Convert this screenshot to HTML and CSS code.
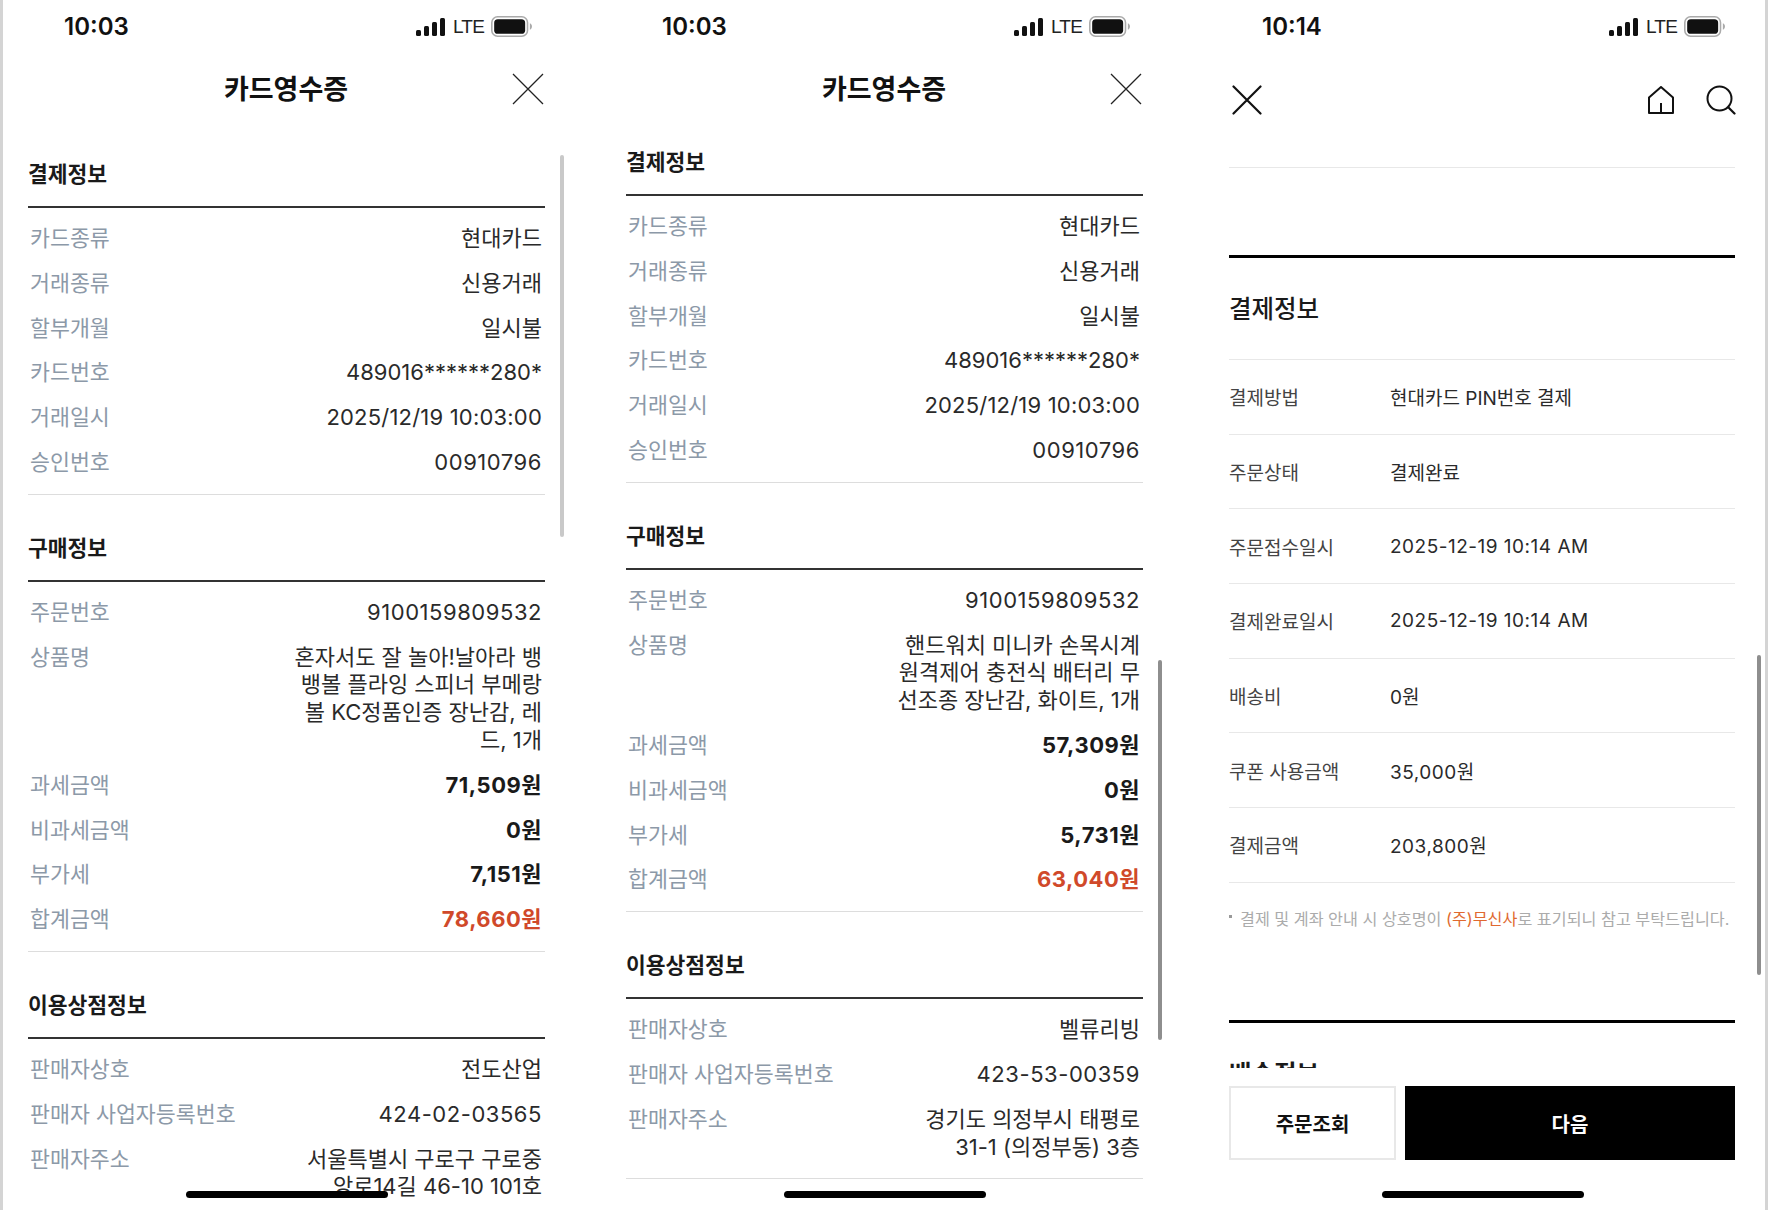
FILE: index.html
```html
<!DOCTYPE html>
<html lang="ko">
<head>
    <meta charset="UTF-8">
    <title>카드영수증</title>
    <link rel="stylesheet" href="styles.css">
</head>
<body>
    <div class="screens">
        <!-- 영수증 1 -->
        <section class="phone">
            <div class="status-bar">
                <span class="time">10:03</span>
                <div class="status-icons">
                    <svg width="30" height="18" viewBox="0 0 30 18"><rect x="0" y="12" width="5" height="6" rx="1.5"/><rect x="8" y="8" width="5" height="10" rx="1.5"/><rect x="16" y="4" width="5" height="14" rx="1.5"/><rect x="24" y="0" width="5" height="18" rx="1.5"/></svg>
                    <span class="lte">LTE</span>
                    <svg width="41" height="21" viewBox="0 0 39 20"><rect x="0.75" y="0.75" width="34" height="18.5" rx="5.5" fill="none" stroke="#aaa" stroke-width="1.5"/><rect x="3" y="3" width="29.5" height="14" rx="3.5"/><path d="M37 7v6c1.2-.5 2-1.6 2-3s-.8-2.500-2-3z" fill="#aaa"/></svg>
                </div>
            </div>
            <header class="receipt-nav">
                <h1>카드영수증</h1>
                <svg class="nav-close" width="32" height="32" viewBox="0 0 32 32"><path d="M1 1l30 30M31 1L1 31" fill="none" stroke="#222" stroke-width="1.3"/></svg>
            </header>
            <div class="receipt-body">
                <div class="receipt-section">
                    <h2>결제정보</h2>
                    <ul class="rows">
                        <li class="row"><span class="label">카드종류</span><span class="value">현대카드</span></li>
                        <li class="row"><span class="label">거래종류</span><span class="value">신용거래</span></li>
                        <li class="row"><span class="label">할부개월</span><span class="value">일시불</span></li>
                        <li class="row"><span class="label">카드번호</span><span class="value">489016******280*</span></li>
                        <li class="row"><span class="label">거래일시</span><span class="value date">2025/12/19 10:03:00</span></li>
                        <li class="row"><span class="label">승인번호</span><span class="value num">00910796</span></li>
                    </ul>
                </div>
                <div class="receipt-section">
                    <h2>구매정보</h2>
                    <ul class="rows">
                        <li class="row"><span class="label">주문번호</span><span class="value num">9100159809532</span></li>
                        <li class="row"><span class="label">상품명</span><span class="value">혼자서도 잘 놀아!날아라 뱅<br>뱅볼 플라잉 스피너 부메랑<br>볼 KC정품인증 장난감, 레<br>드, 1개</span></li>
                        <li class="row"><span class="label">과세금액</span><span class="value amount">71,509원</span></li>
                        <li class="row"><span class="label">비과세금액</span><span class="value amount">0원</span></li>
                        <li class="row"><span class="label">부가세</span><span class="value amount">7,151원</span></li>
                        <li class="row"><span class="label">합계금액</span><span class="value amount total">78,660원</span></li>
                    </ul>
                </div>
                <div class="receipt-section">
                    <h2>이용상점정보</h2>
                    <ul class="rows">
                        <li class="row"><span class="label">판매자상호</span><span class="value">전도산업</span></li>
                        <li class="row"><span class="label">판매자 사업자등록번호</span><span class="value num">424-02-03565</span></li>
                        <li class="row"><span class="label">판매자주소</span><span class="value">서울특별시 구로구 구로중<br>앙로14길 46-10 101호</span></li>
                    </ul>
                </div>
            </div>
            <div class="scrollbar scrollbar-one"></div>
            <div class="home-bar"></div>
        </section>

        <!-- 영수증 2 -->
        <section class="phone phone-scrolled">
            <div class="status-bar">
                <span class="time">10:03</span>
                <div class="status-icons">
                    <svg width="30" height="18" viewBox="0 0 30 18"><rect x="0" y="12" width="5" height="6" rx="1.5"/><rect x="8" y="8" width="5" height="10" rx="1.5"/><rect x="16" y="4" width="5" height="14" rx="1.5"/><rect x="24" y="0" width="5" height="18" rx="1.5"/></svg>
                    <span class="lte">LTE</span>
                    <svg width="41" height="21" viewBox="0 0 39 20"><rect x="0.75" y="0.75" width="34" height="18.5" rx="5.5" fill="none" stroke="#aaa" stroke-width="1.5"/><rect x="3" y="3" width="29.5" height="14" rx="3.5"/><path d="M37 7v6c1.2-.5 2-1.6 2-3s-.8-2.500-2-3z" fill="#aaa"/></svg>
                </div>
            </div>
            <header class="receipt-nav">
                <h1>카드영수증</h1>
                <svg class="nav-close" width="32" height="32" viewBox="0 0 32 32"><path d="M1 1l30 30M31 1L1 31" fill="none" stroke="#222" stroke-width="1.3"/></svg>
            </header>
            <div class="receipt-body">
                <div class="receipt-section">
                    <h2>결제정보</h2>
                    <ul class="rows">
                        <li class="row"><span class="label">카드종류</span><span class="value">현대카드</span></li>
                        <li class="row"><span class="label">거래종류</span><span class="value">신용거래</span></li>
                        <li class="row"><span class="label">할부개월</span><span class="value">일시불</span></li>
                        <li class="row"><span class="label">카드번호</span><span class="value">489016******280*</span></li>
                        <li class="row"><span class="label">거래일시</span><span class="value date">2025/12/19 10:03:00</span></li>
                        <li class="row"><span class="label">승인번호</span><span class="value num">00910796</span></li>
                    </ul>
                </div>
                <div class="receipt-section">
                    <h2>구매정보</h2>
                    <ul class="rows">
                        <li class="row"><span class="label">주문번호</span><span class="value num">9100159809532</span></li>
                        <li class="row"><span class="label">상품명</span><span class="value">핸드워치 미니카 손목시계<br>원격제어 충전식 배터리 무<br>선조종 장난감, 화이트, 1개</span></li>
                        <li class="row"><span class="label">과세금액</span><span class="value amount">57,309원</span></li>
                        <li class="row"><span class="label">비과세금액</span><span class="value amount">0원</span></li>
                        <li class="row"><span class="label">부가세</span><span class="value amount">5,731원</span></li>
                        <li class="row"><span class="label">합계금액</span><span class="value amount total">63,040원</span></li>
                    </ul>
                </div>
                <div class="receipt-section">
                    <h2>이용상점정보</h2>
                    <ul class="rows">
                        <li class="row"><span class="label">판매자상호</span><span class="value">벨류리빙</span></li>
                        <li class="row"><span class="label">판매자 사업자등록번호</span><span class="value num">423-53-00359</span></li>
                        <li class="row"><span class="label">판매자주소</span><span class="value">경기도 의정부시 태평로<br>31-1 (의정부동) 3층</span></li>
                    </ul>
                </div>
            </div>
            <div class="scrollbar scrollbar-two"></div>
            <div class="home-bar"></div>
        </section>

        <!-- 주문 완료 -->
        <section class="phone phone-order">
            <div class="status-bar">
                <span class="time">10:14</span>
                <div class="status-icons">
                    <svg width="30" height="18" viewBox="0 0 30 18"><rect x="0" y="12" width="5" height="6" rx="1.5"/><rect x="8" y="8" width="5" height="10" rx="1.5"/><rect x="16" y="4" width="5" height="14" rx="1.5"/><rect x="24" y="0" width="5" height="18" rx="1.5"/></svg>
                    <span class="lte">LTE</span>
                    <svg width="41" height="21" viewBox="0 0 39 20"><rect x="0.75" y="0.75" width="34" height="18.5" rx="5.5" fill="none" stroke="#aaa" stroke-width="1.5"/><rect x="3" y="3" width="29.5" height="14" rx="3.5"/><path d="M37 7v6c1.2-.5 2-1.6 2-3s-.8-2.500-2-3z" fill="#aaa"/></svg>
                </div>
            </div>
            <header class="order-nav">
                <svg width="30" height="30" viewBox="0 0 30 30"><path d="M1.500 1.500l27 27M28.500 1.500l-27 27" fill="none" stroke="#111" stroke-width="2.200" stroke-linecap="round"/></svg>
                <div class="order-nav-right">
                    <svg width="28" height="28" viewBox="0 0 28 28"><path d="M2 11.500L14 1l12 10.500V27H2zM14 27V17" fill="none" stroke="#111" stroke-width="2" stroke-linejoin="round"/></svg>
                    <svg width="30" height="30" viewBox="0 0 30 30"><circle cx="13.500" cy="13.500" r="12" fill="none" stroke="#111" stroke-width="2"/><path d="M22.500 22.500l6 6" fill="none" stroke="#111" stroke-width="2.200" stroke-linecap="round"/></svg>
                </div>
            </header>
            <div class="order-body">
                <div class="order-gap"></div>
                <h2>결제정보</h2>
                <ul class="order-rows">
                    <li class="order-row"><span class="order-label">결제방법</span><span>현대카드 PIN번호 결제</span></li>
                    <li class="order-row"><span class="order-label">주문상태</span><span>결제완료</span></li>
                    <li class="order-row"><span class="order-label">주문접수일시</span><span class="order-num">2025-12-19 10:14 AM</span></li>
                    <li class="order-row"><span class="order-label">결제완료일시</span><span class="order-num">2025-12-19 10:14 AM</span></li>
                    <li class="order-row"><span class="order-label">배송비</span><span>0원</span></li>
                    <li class="order-row"><span class="order-label">쿠폰 사용금액</span><span class="order-num">35,000원</span></li>
                    <li class="order-row"><span class="order-label">결제금액</span><span class="order-num">203,800원</span></li>
                </ul>
                <p class="order-note"><span class="note-dot"></span>결제 및 계좌 안내 시 상호명이 <em>(주)무신사</em>로 표기되니 참고 부탁드립니다.</p>
                <h2 class="order-next">배송정보</h2>
            </div>
            <div class="order-buttons">
                <button class="btn-lookup">주문조회</button>
                <button class="btn-next">다음</button>
            </div>
            <div class="scrollbar scrollbar-three"></div>
            <div class="home-bar"></div>
        </section>
    </div>
</body>
</html>
```

FILE: styles.css
```css
* {
    box-sizing: border-box;
}
html, body {
    margin: 0;
    padding: 0;
    height: 1210px;
    overflow: hidden;
    background-color: #fff;
}
body {
    font-family: Inter, "Noto Sans CJK KR", sans-serif;
    color: #222;
}
ul {
    list-style: none;
    margin: 0;
    padding: 0;
}
.screens {
    display: flex;
    height: 1210px;
    border-left: 3px solid #d4d4d4;
    border-right: 3px solid #d4d4d4;
}
.phone {
    position: relative;
    width: 598px;
    height: 1210px;
    overflow: hidden;
    flex-shrink: 0;
}
.phone-order {
    width: 566px;
}

/* status bar */
.status-bar {
    display: flex;
    justify-content: space-between;
    align-items: center;
    height: 52px;
    padding: 1px 69px 0 61px;
}
.phone-order .status-bar {
    padding: 1px 40px 0 63px;
}
.time {
    font-size: 24px;
    font-weight: 600;
    color: #111;
}
.status-icons {
    display: flex;
    align-items: center;
    gap: 7px;
}
.status-icons svg {
    display: block;
    fill: #111;
}
.lte {
    width: 30px;
    margin-right: 1px;
    font-family: "Liberation Sans", sans-serif;
    font-size: 19px;
    letter-spacing: -0.8px;
    color: #222;
}

/* receipt */
.receipt-nav {
    position: relative;
    height: 69px;
    padding-top: 20px;
    text-align: center;
}
.receipt-nav h1 {
    margin: 0;
    padding-right: 32px;
    font-size: 27px;
    line-height: 36px;
    font-weight: 700;
    color: #111;
}
.nav-close {
    position: absolute;
    left: 509px;
    top: 21px;
}
.receipt-body {
    padding: 0 56px 0 25px;
}
.phone-scrolled .receipt-body {
    margin-top: -12px;
}
.receipt-section {
    border-bottom: 1px solid #ddd;
    padding-bottom: 8.5px;
}
.receipt-section h2 {
    margin: 0;
    padding: 39px 0 18px;
    font-size: 21.5px;
    line-height: 28px;
    font-weight: 700;
    color: #1a1a1a;
    border-bottom: 2px solid #333;
}
.rows {
    padding-top: 8.5px;
}
.row {
    display: flex;
    justify-content: space-between;
    padding: 8.5px 3px 8.5px 2px;
    font-size: 22px;
    line-height: 27.8px;
}
.label {
    font-size: 21.7px;
    color: #8c99a8;
}
.value {
    text-align: right;
    white-space: nowrap;
    color: #2a2a2a;
}
.num {
    letter-spacing: 0.55px;
}
.date {
    letter-spacing: 0.2px;
}
.amount {
    font-weight: 700;
    letter-spacing: 0.5px;
    color: #1a1a1a;
}
.total {
    color: #d0492a;
}
.scrollbar {
    position: absolute;
    width: 4px;
    border-radius: 2px;
    background-color: #c9c9c9;
}
.scrollbar-one {
    left: 557px;
    top: 155px;
    height: 382px;
}
.scrollbar-two {
    left: 557px;
    top: 660px;
    height: 380px;
    background-color: #8e8e8e;
}
.scrollbar-three {
    left: 558px;
    top: 655px;
    height: 320px;
    background-color: #8e8e8e;
}
.home-bar {
    position: absolute;
    left: 183px;
    top: 1191px;
    width: 202px;
    height: 7px;
    border-radius: 4px;
    background-color: #000;
}

/* order */
.order-nav {
    display: flex;
    justify-content: space-between;
    align-items: center;
    height: 115px;
    padding: 0 29px 19px 33px;
}
.order-nav svg {
    display: block;
}
.order-nav-right {
    display: flex;
    align-items: center;
    gap: 31px;
}
.order-body {
    height: 901px;
    margin: 0 30px;
    overflow: hidden;
    border-top: 1px solid #e8e8e8;
}
.order-gap {
    height: 90px;
    border-bottom: 3px solid #000;
}
.order-body h2 {
    margin: 0;
    font-size: 24.5px;
    line-height: 32px;
    font-weight: 500;
    color: #1a1a1a;
    padding: 35px 0 34px;
}
.order-rows {
    border-top: 1px solid #e8e8e8;
}
.order-row {
    display: flex;
    align-items: center;
    height: 74.7px;
    font-size: 19px;
    color: #2a2a2a;
    border-bottom: 1px solid #e8e8e8;
}
.order-label {
    width: 161px;
    flex-shrink: 0;
    color: #444;
}
.order-num {
    letter-spacing: 0.5px;
}
.order-note {
    position: relative;
    margin: 0;
    height: 140px;
    padding: 24px 0 0 11px;
    font-size: 16.2px;
    line-height: 24px;
    color: #ababab;
    white-space: nowrap;
    border-bottom: 3px solid #000;
}
.order-note em {
    font-style: normal;
    color: #e0692f;
}
.note-dot {
    position: absolute;
    left: 0;
    top: 32px;
    width: 3px;
    height: 3px;
    background-color: #999;
}
.order-body .order-next {
    font-weight: 700;
}
.order-buttons {
    display: flex;
    gap: 9px;
    margin: 18px 30px 0;
    height: 74px;
}
.order-buttons button {
    font-family: inherit;
    font-size: 20px;
    font-weight: 700;
    padding: 0;
}
.btn-lookup {
    width: 167px;
    background-color: #fff;
    color: #111;
    border: 2px solid #e8e8e8;
}
.btn-next {
    flex: 1;
    background-color: #000;
    color: #fff;
    border: none;
}
```
